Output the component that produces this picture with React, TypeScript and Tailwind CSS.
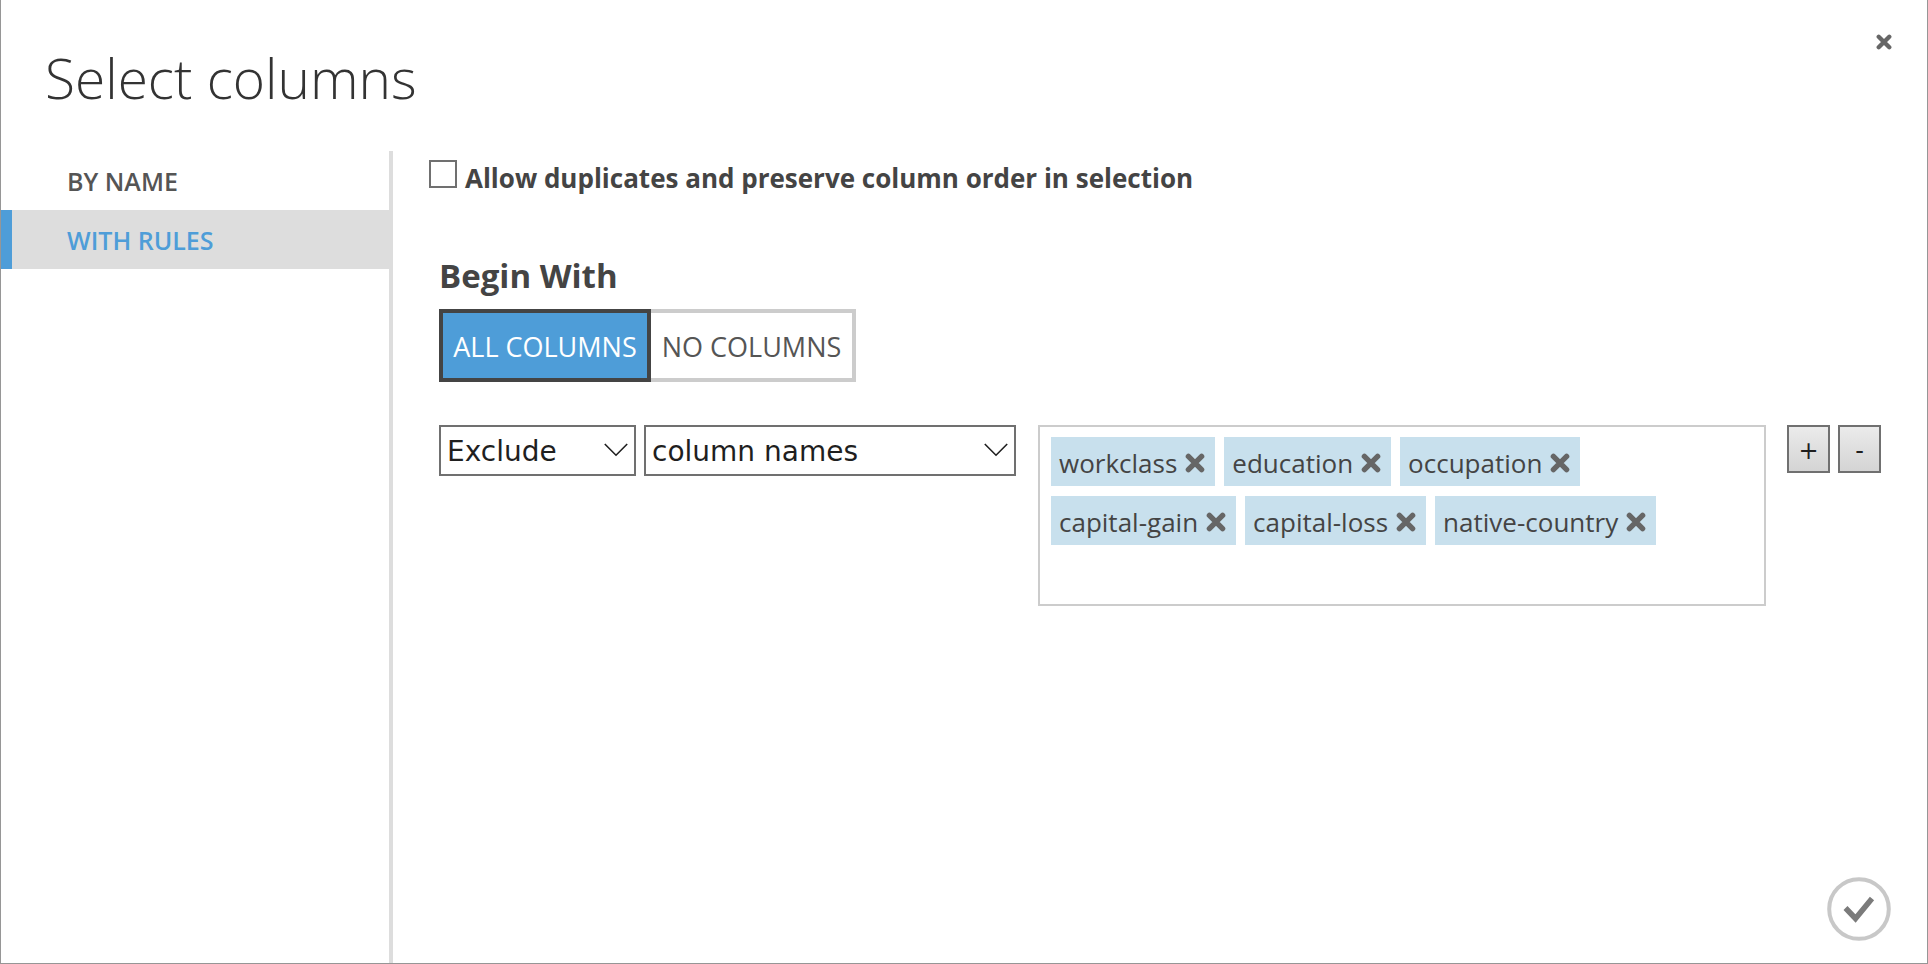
import { useState, type ReactNode } from "react";

const initialColumns = [
  "workclass",
  "education",
  "occupation",
  "capital-gain",
  "capital-loss",
  "native-country",
];

function CrossIcon({ className }: { className: string }) {
  return (
    <svg viewBox="0 0 20 20" className={className} aria-hidden="true">
      <path
        d="M3.4 3.4 L16.6 16.6 M16.6 3.4 L3.4 16.6"
        stroke="#666666"
        strokeWidth="5.4"
        strokeLinecap="round"
        fill="none"
      />
    </svg>
  );
}

function SelectBox({
  label,
  options,
  className,
}: {
  label: string;
  options: string[];
  className: string;
}) {
  return (
    <div className={`relative ${className}`}>
      <select
        aria-label={label}
        className="h-[51px] w-full appearance-none border-2 border-[#707070] bg-white pt-[2px] pr-9 pl-[6px] font-['DejaVu_Sans',sans-serif] text-[28px] leading-9 text-[#1f1f1f]"
      >
        {options.map((option) => (
          <option key={option}>{option}</option>
        ))}
      </select>
      <svg
        viewBox="0 0 24 14"
        className="pointer-events-none absolute top-[18px] right-2 h-[14px] w-6"
        aria-hidden="true"
      >
        <path d="M0.8 1 L12 12.2 L23.2 1" stroke="#1f1f1f" strokeWidth="1.6" fill="none" />
      </svg>
    </div>
  );
}

function RowButton({ label, children }: { label: string; children: ReactNode }) {
  return (
    <button
      type="button"
      aria-label={label}
      className="flex h-12 w-[43px] items-center justify-center border-2 border-[#707070] bg-linear-to-b from-[#ebebeb] to-[#d4d4d4] pt-1 font-['DejaVu_Sans',sans-serif] text-2xl text-[#1f1f1f]"
    >
      {children}
    </button>
  );
}

export default function App() {
  const [columns, setColumns] = useState(initialColumns);

  return (
    <div
      role="dialog"
      aria-labelledby="title"
      className="flex min-h-screen flex-col border border-t-0 border-[#969696] bg-white font-['Open_Sans','Noto_Sans',sans-serif] text-[#444444]"
    >
      <header className="flex h-[151px] shrink-0 items-start justify-between pt-[34px] pr-[35px] pl-11">
        <h1 id="title" className="pt-[6px] text-[55px] leading-[76px] font-light text-[#333333]">
          Select columns
        </h1>
        <button type="button" aria-label="Close">
          <CrossIcon className="size-4" />
        </button>
      </header>

      <div className="flex grow">
        <nav className="w-[392px] shrink-0 border-r-4 border-[#dddddd] text-[25px] font-semibold">
          <a href="#by-name" className="flex h-[59px] items-center pt-[2px] pl-[66px] text-[#555555]">
            BY NAME
          </a>
          <a
            href="#with-rules"
            aria-current="page"
            className="flex h-[59px] items-center border-l-[11px] border-[#4e9dd8] bg-[#dddddd] pt-[2px] pl-[55px] text-[#4e9dd8]"
          >
            WITH RULES
          </a>
        </nav>

        <main className="flex min-w-0 grow flex-col px-9">
          <label className="flex h-[54px] items-center gap-2 text-[26px] leading-9 font-bold">
            <input
              type="checkbox"
              className="mb-2 size-7 shrink-0 appearance-none border-2 border-[#707070] bg-white checked:bg-[#4e9dd8]"
            />
            Allow duplicates and preserve column order in selection
          </label>

          <section className="flex grow flex-col pt-[47px] pl-[10px]">
            <h2 className="h-[57px] text-[33px] leading-[48px] font-bold">Begin With</h2>
            <div className="flex h-[73px] self-start text-[27px]">
              <button
                type="button"
                aria-pressed="true"
                className="w-[212px] border-4 border-[#444444] bg-[#4e9dd8] pt-[3px] whitespace-nowrap text-white"
              >
                ALL COLUMNS
              </button>
              <button
                type="button"
                aria-pressed="false"
                className="w-[205px] border-4 border-l-0 border-[#cccccc] pt-[3px] whitespace-nowrap text-[#555555]"
              >
                NO COLUMNS
              </button>
            </div>

            <div className="mt-[43px] mr-[10px] flex items-start">
              <SelectBox label="Rule" options={["Exclude", "Include"]} className="mr-2 w-[197px]" />
              <SelectBox
                label="Match by"
                options={["column names", "column indices", "column type"]}
                className="mr-[22px] w-[372px]"
              />
              <ul className="flex min-h-[181px] min-w-0 flex-1 flex-wrap content-start gap-x-[9px] gap-y-[10px] border-2 border-[#cccccc] px-[11px] py-[10px]">
                {columns.map((column) => (
                  <li
                    key={column}
                    className="flex h-[49px] items-center gap-2 bg-[#c8e0ed] pr-[10px] pl-2 text-[26px]"
                  >
                    <span className="pt-1">{column}</span>
                    <button
                      type="button"
                      aria-label={`Remove ${column}`}
                      onClick={() => setColumns(columns.filter((c) => c !== column))}
                    >
                      <CrossIcon className="mt-[2px] size-5" />
                    </button>
                  </li>
                ))}
              </ul>
              <div className="ml-[21px] flex gap-2">
                <RowButton label="Add rule">+</RowButton>
                <RowButton label="Remove rule">-</RowButton>
              </div>
            </div>

            <button type="button" aria-label="OK" className="mt-auto mb-[22px] size-16 self-end">
              <svg viewBox="0 0 64 64" className="size-16" aria-hidden="true">
                <circle cx="32" cy="32" r="29.8" stroke="#c8c8c8" strokeWidth="4" fill="none" />
                <path d="M18.5 31 L28.5 41.5 L45 21.5" stroke="#7b7b7b" strokeWidth="5.5" fill="none" />
              </svg>
            </button>
          </section>
        </main>
      </div>
    </div>
  );
}
